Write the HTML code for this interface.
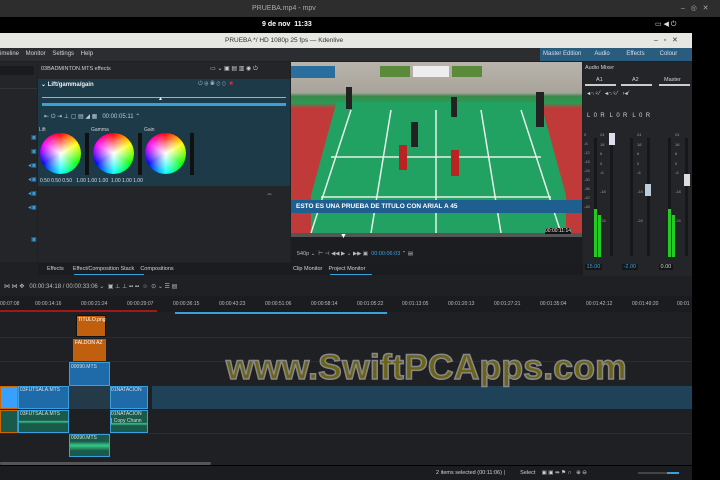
<!DOCTYPE html>
<html><head><meta charset="utf-8"><style>
*{margin:0;padding:0;box-sizing:border-box}
body{width:720px;height:480px;background:#000;position:relative;overflow:hidden;font-family:"Liberation Sans",sans-serif;font-size:6px;color:#cfd2d4}
.a{position:absolute}
.t{position:absolute;white-space:nowrap}
.r{position:absolute;top:301px;font-size:5px;color:#bbb;white-space:nowrap}
.trk{position:absolute;width:3px;height:118px;background:#15171a;top:138px}
</style></head><body>
<div class="a" style="left:0;top:0;width:720px;height:17px;background:#2d2d2d"></div>
<div class="t" style="left:252px;top:5px;color:#aaa;font-size:7px">PRUEBA.mp4 - mpv</div>
<div class="t" style="left:681px;top:4px;color:#aaa;font-size:7px">–&nbsp;&nbsp;&nbsp;◎&nbsp;&nbsp;&nbsp;✕</div>
<div class="t" style="left:262px;top:21px;color:#fff;font-size:7px;font-weight:bold">9 de nov&nbsp; 11:33</div>
<div class="t" style="left:655px;top:20px;color:#ddd;font-size:7px">▭ ◀ ⏻</div>
<div class="a" style="left:0;top:33px;width:692px;height:15px;background:#e6e6e3"></div>
<div class="t" style="left:225px;top:37px;color:#333;font-size:6.5px">PRUEBA */ HD 1080p 25 fps — Kdenlive</div>
<div class="t" style="left:654px;top:36px;color:#333;font-size:7px">–&nbsp;&nbsp;&nbsp;▫&nbsp;&nbsp;&nbsp;✕</div>
<div class="a" style="left:0;top:48px;width:692px;height:13px;background:#2b2d30"></div>
<div class="t" style="left:0;top:51px;font-size:6px">imeline&nbsp;&nbsp;&nbsp; Monitor&nbsp;&nbsp;&nbsp; Settings&nbsp;&nbsp;&nbsp; Help</div>
<div class="a" style="left:540px;top:48px;width:152px;height:13px;background:#2a5d7d"></div>
<div class="t" style="left:543px;top:51px;font-size:6px;color:#dde">Master Edition&nbsp;&nbsp;&nbsp;&nbsp;&nbsp;&nbsp;&nbsp; Audio&nbsp;&nbsp;&nbsp;&nbsp;&nbsp;&nbsp;&nbsp;&nbsp;&nbsp; Effects&nbsp;&nbsp;&nbsp;&nbsp;&nbsp;&nbsp;&nbsp;&nbsp; Colour</div>
<!-- main panels -->
<div class="a" style="left:0;top:61px;width:692px;height:216px;background:#1e2023"></div>
<div class="a" style="left:0;top:62px;width:37px;height:200px;background:#232528"></div>
<div class="a" style="left:0;top:66px;width:34px;height:9px;background:#1a1b1d"></div>
<div class="a" style="left:0;top:88px;width:37px;height:1px;background:#333"></div>
<div class="t" style="left:28px;top:159px;color:#3a9bd5;font-size:6px;line-height:14px">◂▣<br>◂▣<br>◂▣<br>◂▣</div>
<div class="t" style="left:31px;top:131px;color:#3a9bd5;font-size:6px;line-height:14px">▣<br>▣</div>
<div class="t" style="left:31px;top:236px;color:#3a9bd5">▣</div>
<!-- effects -->
<div class="a" style="left:38px;top:62px;width:252px;height:200px;background:#232529"></div>
<div class="t" style="left:41px;top:66px;font-size:5.5px">03BADMINTON.MTS effects</div>
<div class="t" style="left:210px;top:65px;font-size:6px">▭ ⌄ ▣ ▤ ▥ ◉ ⏻</div>
<div class="a" style="left:38px;top:79px;width:252px;height:107px;background:#1d3a48"></div>
<div class="t" style="left:41px;top:81px;font-size:6px;color:#eee;font-weight:bold">⌄ Lift/gamma/gain</div>
<div class="t" style="left:198px;top:81px;font-size:6px;color:#9ab">⏻ ⊕ ◉ ⊘ ⊙ &nbsp;<span style="color:#b33">■</span></div>
<div class="a" style="left:42px;top:97px;width:244px;height:1px;background:#aab"></div>
<div class="a" style="left:42px;top:103px;width:244px;height:3px;background:#3aa0dc"></div>
<div class="t" style="left:158px;top:96px;font-size:5px;color:#fff">▲</div>
<div class="t" style="left:44px;top:113px;font-size:6px;color:#bcd">⇤ ⏻ ⇥ ⊥ ▢ ▤ ◢ ▦&nbsp;&nbsp; 00:00:05:11 ⌃</div>
<div class="t" style="left:39px;top:127px;font-size:5px">Lift</div>
<div class="t" style="left:91px;top:127px;font-size:5px">Gamma</div>
<div class="t" style="left:144px;top:127px;font-size:5px">Gain</div>
<div class="a" style="left:40px;top:133px;width:41px;height:41px;border-radius:50%;background:radial-gradient(circle,#fff 0,rgba(255,255,255,0) 70%),conic-gradient(#f00,#ff0,#0f0,#0ff,#00f,#f0f,#f00)"></div>
<div class="a" style="left:93px;top:133px;width:41px;height:41px;border-radius:50%;background:radial-gradient(circle,#fff 0,rgba(255,255,255,0) 70%),conic-gradient(#f00,#ff0,#0f0,#0ff,#00f,#f0f,#f00)"></div>
<div class="a" style="left:145px;top:133px;width:41px;height:41px;border-radius:50%;background:radial-gradient(circle,#fff 0,rgba(255,255,255,0) 70%),conic-gradient(#f00,#ff0,#0f0,#0ff,#00f,#f0f,#f00)"></div>
<div class="a" style="left:85px;top:133px;width:4px;height:42px;background:#111"></div>
<div class="a" style="left:138px;top:133px;width:4px;height:42px;background:#111"></div>
<div class="a" style="left:190px;top:133px;width:4px;height:42px;background:#111"></div>
<div class="t" style="left:40px;top:178px;font-size:5px;color:#ddd">0.50 0.50 0.50&nbsp;&nbsp; 1.00 1.00 1.00&nbsp; 1.00 1.00 1.00</div>
<div class="t" style="left:266px;top:191px;font-size:7px;color:#aaa">⇔</div>
<div class="a" style="left:38px;top:263px;width:547px;height:12px;background:#1b1c1f"></div>
<div class="t" style="left:47px;top:266px;font-size:5.5px">Effects&nbsp;&nbsp;&nbsp;&nbsp;&nbsp; Effect/Composition Stack&nbsp;&nbsp;&nbsp; Compositions</div>
<div class="a" style="left:74px;top:274px;width:70px;height:1px;background:#3aa0dc"></div>
<div class="t" style="left:293px;top:266px;font-size:5.5px">Clip Monitor&nbsp;&nbsp;&nbsp; Project Monitor</div>
<div class="a" style="left:330px;top:274px;width:42px;height:1px;background:#3aa0dc"></div>
<!-- video -->
<div class="a" style="left:291px;top:62px;width:291px;height:171px;overflow:hidden;background:linear-gradient(#b8b4ac 0,#a8a49c 18%,#3a8a4a 20%,#2a9a55 24%,#c03a3a 27%,#c03a3a 100%)">
<div class="a" style="left:20px;top:40px;width:255px;height:140px;background:#21a262;clip-path:polygon(10% 0,90% 0,105% 100%,-5% 100%)"></div>
<svg class="a" style="left:0;top:0" width="291" height="171"><g stroke="#e8f0ea" stroke-width="1.5" fill="none"><path d="M60 48 L20 171 M100 48 L80 171 M190 48 L210 171 M230 48 L270 171 M145 48 L145 171 M40 95 L250 95 M30 135 L260 135"/></g>
<rect x="0" y="4" width="44" height="12" fill="#2a6e9e"/><rect x="89" y="4" width="30" height="11" fill="#5a8a3a"/><rect x="122" y="4" width="36" height="11" fill="#eee"/><rect x="161" y="4" width="30" height="11" fill="#5a8a3a"/>
<g fill="#222"><rect x="55" y="25" width="6" height="22"/><rect x="120" y="60" width="7" height="25"/><rect x="160" y="35" width="6" height="20"/><rect x="108" y="83" width="8" height="25" fill="#b22"/><rect x="160" y="88" width="8" height="26" fill="#b22"/><rect x="245" y="30" width="8" height="35"/></g>
</svg></div>
<div class="a" style="left:291px;top:200px;width:291px;height:13px;background:#1f5f8f"></div>
<div class="t" style="left:296px;top:203px;font-size:6.5px;color:#fff;font-weight:bold">ESTO ES UNA PRUEBA DE TITULO CON ARIAL A 45</div>
<div class="a" style="left:291px;top:233px;width:291px;height:30px;background:#1c1d20"></div>
<div class="a" style="left:291px;top:233px;width:291px;height:4px;background:#555"></div>
<div class="t" style="left:545px;top:228px;font-size:5px;color:#eee;background:#111">00:00:11:14</div>
<div class="t" style="left:340px;top:233px;font-size:7px;color:#fff">▼</div>
<div class="t" style="left:297px;top:251px;font-size:5.5px;color:#bbb">540p ⌄ &nbsp;⊢ ⊣ ◀◀ ▶ ⌄ ▶▶ ▣ &nbsp;<span style="color:#3aa0dc">00:00:06:03</span> ⌃ ▤</div>
<!-- mixer -->
<div class="a" style="left:583px;top:62px;width:109px;height:214px;background:#232528"></div>
<div class="t" style="left:585px;top:65px;font-size:5.5px">Audio Mixer</div>
<div class="t" style="left:596px;top:77px;font-size:5.5px">A1</div>
<div class="t" style="left:632px;top:77px;font-size:5.5px">A2</div>
<div class="t" style="left:664px;top:77px;font-size:5.5px">Master</div>
<div class="a" style="left:585px;top:84px;width:31px;height:2px;background:#ccc"></div>
<div class="a" style="left:621px;top:84px;width:31px;height:2px;background:#ccc"></div>
<div class="a" style="left:659px;top:84px;width:31px;height:2px;background:#ccc"></div>
<div class="t" style="left:587px;top:90px;font-size:6px">◂∩♀⁄ &nbsp;&nbsp;◂∩♀⁄&nbsp; &nbsp;›◂⁄</div>
<div class="t" style="left:587px;top:113px;font-size:6px">L&nbsp; 0 &nbsp;R&nbsp;&nbsp; L&nbsp; 0 &nbsp;R&nbsp;&nbsp; L&nbsp; 0 &nbsp;R</div>
<div class="trk" style="left:594px"></div><div class="trk" style="left:610px"></div>
<div class="trk" style="left:630px"></div><div class="trk" style="left:647px"></div>
<div class="trk" style="left:668px"></div><div class="trk" style="left:685px"></div>
<div class="t" style="left:584px;top:130px;font-size:4px;color:#999;line-height:9px">0<br>-6<br>-12<br>-18<br>-24<br>-30<br>-36<br>-42<br>-48</div>
<div class="t" style="left:600px;top:130px;font-size:4px;color:#999;line-height:9.5px">24<br>18<br>6<br>0<br>-6<br><br>-18<br><br><br>-24</div>
<div class="t" style="left:637px;top:130px;font-size:4px;color:#999;line-height:9.5px">24<br>18<br>6<br>0<br>-6<br><br>-18<br><br><br>-24</div>
<div class="t" style="left:675px;top:130px;font-size:4px;color:#999;line-height:9.5px">24<br>18<br>6<br>0<br>-6<br><br>-18<br><br><br>-24</div>
<div class="a" style="left:594px;top:209px;width:3px;height:48px;background:#2c2"></div>
<div class="a" style="left:598px;top:215px;width:3px;height:42px;background:#2c2"></div>
<div class="a" style="left:668px;top:209px;width:3px;height:48px;background:#2c2"></div>
<div class="a" style="left:672px;top:215px;width:3px;height:42px;background:#2c2"></div>
<div class="a" style="left:609px;top:133px;width:6px;height:12px;background:#dde"></div>
<div class="a" style="left:645px;top:184px;width:6px;height:12px;background:#bcd"></div>
<div class="a" style="left:684px;top:174px;width:6px;height:12px;background:#ddd"></div>
<div class="t" style="left:585px;top:264px;font-size:5.5px;color:#3aa0dc;background:#151618">&nbsp;15.00&nbsp;</div>
<div class="t" style="left:622px;top:264px;font-size:5.5px;color:#3aa0dc;background:#151618">&nbsp;-2.00&nbsp;</div>
<div class="t" style="left:659px;top:264px;font-size:5.5px;background:#151618">&nbsp;0.00&nbsp;</div>
<!-- timeline -->
<div class="a" style="left:0;top:277px;width:692px;height:188px;background:#1e2023"></div>
<div class="t" style="left:4px;top:283px;font-size:6px;color:#bbb">⋈ ⋈ ✥ &nbsp; 00:00:34:18 / 00:00:33:06 ⌄ &nbsp;▣ ⊥ ⊥ ▪▪ ▪▪ &nbsp;☆ &nbsp;⊙ ⌄ ☰ ▤</div>
<div class="a" style="left:0;top:296px;width:692px;height:16px;background:#1b1c1f"></div>
<div class="r" style="left:0">00:07:08</div>
<div class="r" style="left:35px">00:00:14:16</div>
<div class="r" style="left:81px">00:00:21:24</div>
<div class="r" style="left:127px">00:00:29:07</div>
<div class="r" style="left:173px">00:00:36:15</div>
<div class="r" style="left:219px">00:00:43:23</div>
<div class="r" style="left:265px">00:00:51:06</div>
<div class="r" style="left:311px">00:00:58:14</div>
<div class="r" style="left:357px">00:01:05:22</div>
<div class="r" style="left:402px">00:01:13:05</div>
<div class="r" style="left:448px">00:01:20:13</div>
<div class="r" style="left:494px">00:01:27:21</div>
<div class="r" style="left:540px">00:01:35:04</div>
<div class="r" style="left:586px">00:01:42:12</div>
<div class="r" style="left:632px">00:01:49:20</div>
<div class="r" style="left:677px">00:01</div>
<div class="a" style="left:0;top:310px;width:157px;height:2px;background:#a01818"></div>
<div class="a" style="left:175px;top:312px;width:212px;height:2px;background:#3aa0dc"></div>
<div class="a" style="left:0;top:337px;width:692px;height:1px;background:#2a2c30"></div>
<div class="a" style="left:0;top:361px;width:692px;height:1px;background:#2a2c30"></div>
<div class="a" style="left:0;top:433px;width:692px;height:1px;background:#2a2c30"></div>
<div class="a" style="left:76px;top:315px;width:30px;height:22px;background:#c0600f;border:1px solid #111"></div>
<div class="t" style="left:78px;top:317px;font-size:5px;color:#fff">TITULO.png</div>
<div class="a" style="left:73px;top:339px;width:33px;height:22px;background:#c0600f"></div>
<div class="t" style="left:75px;top:340px;font-size:5px;color:#fff">FALDON AZ</div>
<div class="a" style="left:69px;top:362px;width:41px;height:24px;background:#1f6aa8;border:1px solid #3aa0dc"></div>
<div class="t" style="left:71px;top:364px;font-size:5px;color:#ddd">00090.MTS</div>
<div class="a" style="left:152px;top:386px;width:540px;height:23px;background:#1f4258"></div>
<div class="a" style="left:0;top:386px;width:18px;height:23px;background:#3aa0ff;border:1px solid #c60"></div>
<div class="a" style="left:18px;top:386px;width:51px;height:23px;background:#1f6aa8;border:1px solid #3aa0dc"></div>
<div class="t" style="left:20px;top:387px;font-size:5px;color:#ddd">03FUTSALA.MTS</div>
<div class="a" style="left:69px;top:386px;width:41px;height:23px;background:#253a48"></div>
<div class="a" style="left:110px;top:386px;width:38px;height:23px;background:#1f6aa8;border:1px solid #3aa0dc"></div>
<div class="t" style="left:111px;top:387px;font-size:5px;color:#ddd">01NATACION</div>
<div class="a" style="left:0;top:410px;width:18px;height:23px;background:#1a5a4a;border:1px solid #c60"></div>
<div class="a" style="left:18px;top:410px;width:51px;height:23px;background:linear-gradient(#1a5a4a 45%,#3c8 50%,#1a5a4a 60%);border:1px solid #3aa0dc"></div>
<div class="t" style="left:20px;top:411px;font-size:5px;color:#ddd">03FUTSALA.MTS</div>
<div class="a" style="left:110px;top:410px;width:38px;height:23px;background:linear-gradient(#1a5a4a 55%,#3c8 60%,#1a5a4a 70%);border:1px solid #3aa0dc"></div>
<div class="t" style="left:111px;top:411px;font-size:5px;color:#ddd;line-height:7px">01NATACION<br><span style="background:#c90">&nbsp;</span> Copy Chann</div>
<div class="a" style="left:69px;top:434px;width:41px;height:23px;background:linear-gradient(#1a5a4a 30%,#3c8 50%,#1a5a4a 75%);border:1px solid #3aa0dc"></div>
<div class="t" style="left:71px;top:435px;font-size:5px;color:#ddd">00090.MTS</div>
<div class="a" style="left:0;top:462px;width:211px;height:3px;background:#555;border-radius:2px"></div>
<div class="a" style="left:0;top:466px;width:692px;height:14px;background:#1b1c1f"></div>
<div class="t" style="left:436px;top:470px;font-size:5.5px">2 items selected (00:11:06) |&nbsp;&nbsp;&nbsp;&nbsp;&nbsp;&nbsp;&nbsp;&nbsp;&nbsp; Select &nbsp;&nbsp; ▣ ▣ ⇛ ⚑ ∩ &nbsp; ⊕ ⊖</div>
<div class="a" style="left:638px;top:472px;width:40px;height:2px;background:#444"></div>
<div class="a" style="left:667px;top:472px;width:12px;height:2px;background:#3aa0dc"></div>
<!-- watermark -->
<div class="t" style="left:226px;top:347px;font-size:35.5px;font-weight:bold;color:#6b6418;-webkit-text-stroke:1.5px #888;letter-spacing:0.2px">www.SwiftPCApps.com</div>
</body></html>
